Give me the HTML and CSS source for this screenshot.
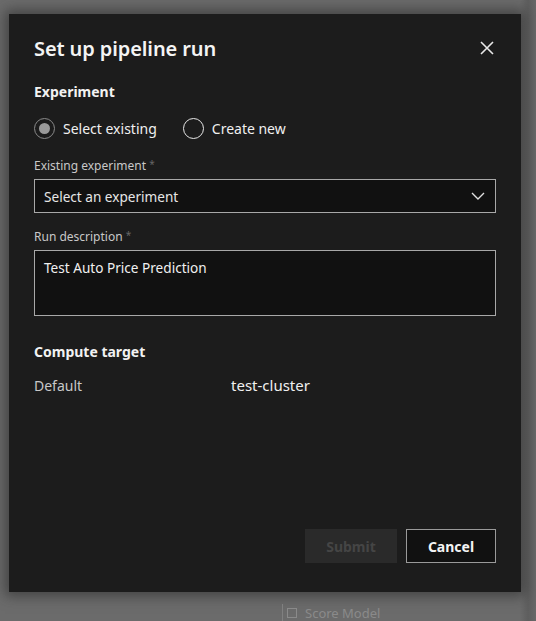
FILE: index.html
```html
<!DOCTYPE html>
<html>
<head>
<meta charset="utf-8">
<link rel="stylesheet" href="styles.css">
</head>
<body>
<div class="backdrop">
  <div class="bg-node"><span class="bg-icon"></span>Score Model</div>
  <div class="dialog">
    <div class="header">
      <h1 class="title">Set up pipeline run</h1>
      <svg class="close" width="16" height="16" viewBox="0 0 16 16"><path d="M2 2 L14 14 M14 2 L2 14" stroke="#e8e8e8" stroke-width="1.6" fill="none"/></svg>
    </div>
    <div class="section-title">Experiment</div>
    <div class="radios">
      <label class="radio"><span class="circle checked"><span class="dot"></span></span>Select existing</label>
      <label class="radio"><span class="circle"></span>Create new</label>
    </div>
    <div class="field-label">Existing experiment <span class="req">*</span></div>
    <div class="select">
      <span>Select an experiment</span>
      <svg width="14" height="8" viewBox="0 0 14 8"><path d="M1 1 L7 7 L13 1" stroke="#e0e0e0" stroke-width="1.4" fill="none"/></svg>
    </div>
    <div class="field-label desc">Run description <span class="req">*</span></div>
    <div class="textarea">Test Auto Price Prediction</div>
    <div class="section-title compute">Compute target</div>
    <div class="kv"><span class="k">Default</span><span class="v">test-cluster</span></div>
    <div class="spacer"></div>
    <div class="footer">
      <button class="btn submit" disabled>Submit</button>
      <button class="btn cancel">Cancel</button>
    </div>
  </div>
</div>
</body>
</html>
```
FILE: styles.css
```css
* { box-sizing: border-box; }
html, body { margin: 0; padding: 0; }
body {
  width: 536px; height: 621px; overflow: hidden;
  background: #6b6b6b;
  font-family: "Noto Sans", "Open Sans", sans-serif;
}
.backdrop {
  position: relative;
  width: 536px; height: 621px;
  padding: 14px 15px 0 9px;
  background: linear-gradient(90deg, #6b6b6b 0, #6b6b6b 520px, #5e5e5e 528px, #686868 536px);
}
.bg-node {
  position: absolute; left: 282px; top: 604px;
  color: #8a8a8a; font-size: 13px;
  display: flex; align-items: center; gap: 8px;
  padding-left: 4px; border-left: 1px solid #808080;
}
.bg-icon { width: 10px; height: 10px; border: 1px solid #8a8a8a; display: inline-block; }
.dialog {
  width: 512px; height: 578px;
  background: #1c1c1c;
  box-shadow: 0 0 12px 4px rgba(40,40,40,0.6);
  padding: 20px 25px 29px 25px;
  display: flex; flex-direction: column;
  color: #f0f0f0;
}
.header { display: flex; justify-content: space-between; align-items: center; height: 28px; }
.title { margin: 0; font-size: 20px; font-weight: 600; color: #f4f4f4; letter-spacing: -0.1px; }
.close { margin-right: 1px; }
.section-title { font-size: 14px; font-weight: 700; margin-top: 20px; height: 20px; color: #f2f2f2; }
.radios { display: flex; gap: 26px; margin-top: 11px; height: 30px; align-items: center; }
.radio { display: flex; align-items: center; gap: 8px; font-size: 14px; color: #f0f0f0; }
.circle { width: 21px; height: 21px; border-radius: 50%; border: 1.5px solid #e8e8e8; display: flex; align-items: center; justify-content: center; }
.circle.checked { border-color: #8a8a8a; }
.dot { width: 11px; height: 11px; border-radius: 50%; background: #9a9a9a; }
.field-label { font-size: 12px; color: #c8c8c8; margin-top: 14px; height: 18px; }
.req { color: #666; font-size: 10px; vertical-align: top; }
.select {
  margin-top: 4px; height: 34px; border: 1px solid #a8a8a8; background: #111;
  display: flex; align-items: center; justify-content: space-between;
  padding: 0 10px 0 9px; font-size: 13.6px; color: #e6e6e6;
}
.field-label.desc { margin-top: 15px; }
.textarea {
  margin-top: 4px; height: 66px; border: 1px solid #a8a8a8; background: #111;
  padding: 7px 9px; font-size: 13.6px; color: #f0f0f0;
}
.section-title.compute { margin-top: 26px; }
.kv { display: flex; font-size: 14px; margin-top: 13px; align-items: baseline; }
.k { width: 197px; color: #c8c8c8; }
.v { color: #f0f0f0; font-size: 15px; }
.spacer { flex: 1; }
.footer { display: flex; justify-content: flex-end; gap: 9px; }
.btn { height: 34px; font-family: inherit; font-size: 14px; font-weight: 700; }
.submit { width: 92px; background: #2a2a2a; border: none; color: #454545; }
.cancel { width: 90px; background: #111; border: 1px solid #9a9a9a; color: #f4f4f4; }
```
